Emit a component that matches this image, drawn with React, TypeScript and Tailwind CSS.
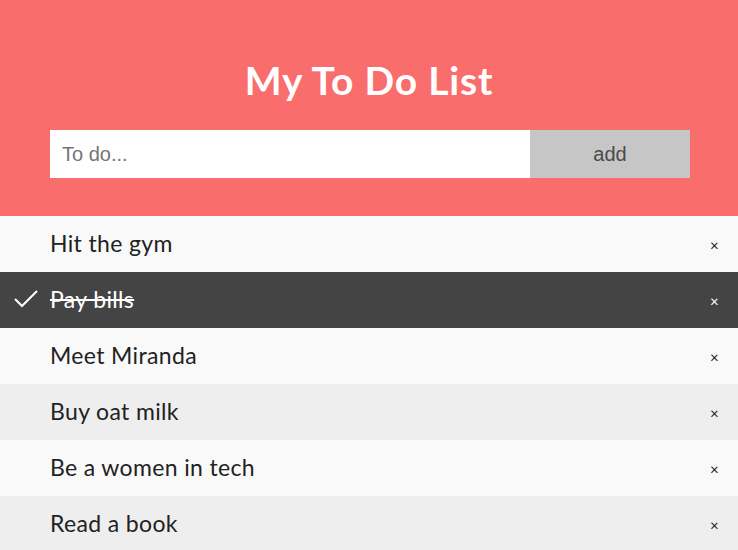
import React, { useState } from "react"

type Todo = { id: number; text: string; done: boolean }

const initial: Todo[] = [
  { id: 1, text: "Hit the gym", done: false },
  { id: 2, text: "Pay bills", done: true },
  { id: 3, text: "Meet Miranda", done: false },
  { id: 4, text: "Buy oat milk", done: false },
  { id: 5, text: "Be a women in tech", done: false },
  { id: 6, text: "Read a book", done: false },
]

export default function App() {
  const [todos, setTodos] = useState<Todo[]>(initial)
  const [value, setValue] = useState("")

  const add = () => {
    if (!value.trim()) return
    setTodos((prev) => [...prev, { id: Date.now(), text: value, done: false }])
    setValue("")
  }

  return (
    <div className="w-[738px] h-[550px] overflow-hidden bg-white font-['Lato',sans-serif]">
      {/* header */}
      <div className="bg-[#f96d6d] h-[216px] pl-[50px] pr-[48px] pt-[56px]">
        <h1 className="text-white text-center text-[39px] font-bold leading-[48px] tracking-[0.8px] pr-[2px]">
          My To Do List
        </h1>
        <div className="flex mt-[26px] h-[48px]">
          <input
            value={value}
            onChange={(e) => setValue(e.target.value)}
            placeholder="To do..."
            className="flex-1 min-w-0 bg-white px-3 text-[20px] text-[#333] placeholder:text-[#757575] outline-none font-['Liberation_Sans',sans-serif]"
          />
          <button
            onClick={add}
            className="w-[160px] bg-[#c6c6c6] text-[#4a4a4a] text-[20px] font-['Liberation_Sans',sans-serif]"
          >
            add
          </button>
        </div>
      </div>

      {/* list */}
      <ul>
        {todos.map((t, idx) => (
          <li
            key={t.id}
            onClick={() =>
              setTodos((prev) =>
                prev.map((p) => (p.id === t.id ? { ...p, done: !p.done } : p))
              )
            }
            className={
              "relative flex items-center h-[56px] pl-[50px] pr-[40px] cursor-pointer text-[23px] tracking-[0.35px] " +
              (t.done
                ? "bg-[#444444] text-white line-through"
                : idx % 2 === 0
                ? "bg-[#f9f9f9] text-[#222]"
                : "bg-[#eeeeee] text-[#222]")
            }
          >
            {t.done && (
              <svg
                className="absolute left-[14px] top-[17px] w-[24px] h-[20px]"
                viewBox="0 0 24 20"
                fill="none"
                stroke="white"
                strokeWidth={2}
              >
                <path d="M1 10l7 7L23 2" />
              </svg>
            )}
            <span className="flex-1 -mt-[2px]">{t.text}</span>
            <button
              onClick={(e) => {
                e.stopPropagation()
                setTodos((prev) => prev.filter((p) => p.id !== t.id))
              }}
              className={
                "absolute right-[19px] text-[15px] leading-none no-underline mt-[2px] " +
                (t.done ? "text-white" : "text-[#222]")
              }
            >
              ×
            </button>
          </li>
        ))}
      </ul>
    </div>
  )
}
